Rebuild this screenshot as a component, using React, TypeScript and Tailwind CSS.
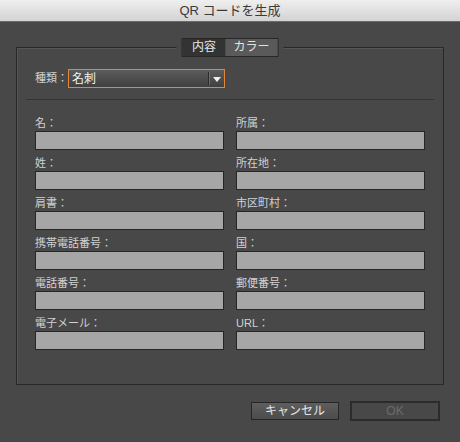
import React from "react";

const font = {
  fontFamily: '"Liberation Sans", "Noto Sans CJK JP", sans-serif',
};

const left = ["名：", "姓：", "肩書：", "携帯電話番号：", "電話番号：", "電子メール："];
const right = ["所属：", "所在地：", "市区町村：", "国：", "郵便番号：", "URL："];

function Field({ label }: { label: string }) {
  return (
    <div className="flex flex-col">
      <div className="h-[16px] text-[11px] leading-[16px] text-[#d2d2d2]">{label}</div>
      <div className="h-[19px] border border-[#262626] bg-[#a6a6a6]" />
    </div>
  );
}

export default function App() {
  return (
    <div className="flex h-[442px] w-[460px] flex-col bg-[#484848]" style={font}>
      {/* title bar */}
      <div className="flex h-[22px] items-center justify-center border-b border-[#6a6a6a] bg-gradient-to-b from-[#efefef] to-[#d3d3d3] text-[13px] text-[#3a3a3a]">
        QR コードを生成
      </div>

      {/* group box */}
      <div className="relative ml-[16px] mt-[25px] w-[428px] border border-[#282828] px-[18px] pb-[34px] pt-[21px] shadow-[inset_1px_1px_0_#555]">
        <div className="absolute left-1/2 top-[-10px] flex -translate-x-1/2 bg-[#484848] px-[5px]">
          <div className="flex border border-[#272727] text-[12px] leading-[17px]">
            <div className="w-[43px] bg-[#333333] text-center text-[#e8e8e8]">内容</div>
            <div className="w-[52px] bg-[#5a5a5a] text-center text-[#e2e2e2]">カラー</div>
          </div>
        </div>

        <div className="flex items-center">
          <span className="text-[11px] text-[#d2d2d2]">種類：</span>
          <div className="ml-[0px] flex h-[19px] w-[157px] items-center border border-[#e0873a] bg-gradient-to-b from-[#5b5b5b] to-[#404040] pl-[3px] text-[12px] text-[#f2f2f2]">
            <span className="flex-1">名刺</span>
            <span className="h-[13px] w-px bg-[#2a2a2a]" />
            <span className="h-[13px] w-px bg-[#6e6e6e]" />
            <svg width="12" height="8" viewBox="0 0 12 8" className="mx-[1px]">
              <path d="M2 2h8l-4 5z" fill="#f0f0f0" />
            </svg>
          </div>
        </div>

        <div className="-mx-[9px] mt-[11px] h-px bg-[#343434]" />

        <div className="mt-[15px] grid grid-cols-2 gap-x-[12px] gap-y-[5px]">
          {left.map((l, i) => (
            <React.Fragment key={l}>
              <Field label={l} />
              <Field label={right[i]} />
            </React.Fragment>
          ))}
        </div>
      </div>

      {/* buttons */}
      <div className="mr-[21px] mt-[17px] flex justify-end gap-[12px]">
        <button className="h-[18px] w-[88px] border border-[#262626] bg-gradient-to-b from-[#5e5e5e] to-[#4c4c4c] text-[12px] leading-none text-[#e6e6e6]">
          キャンセル
        </button>
        <button className="h-[18px] w-[88px] border border-[#2c2c2c] bg-[#484848] text-[12px] leading-none text-[#6c6c6c] outline outline-1 outline-[#2a2a2a]">
          OK
        </button>
      </div>
    </div>
  );
}
